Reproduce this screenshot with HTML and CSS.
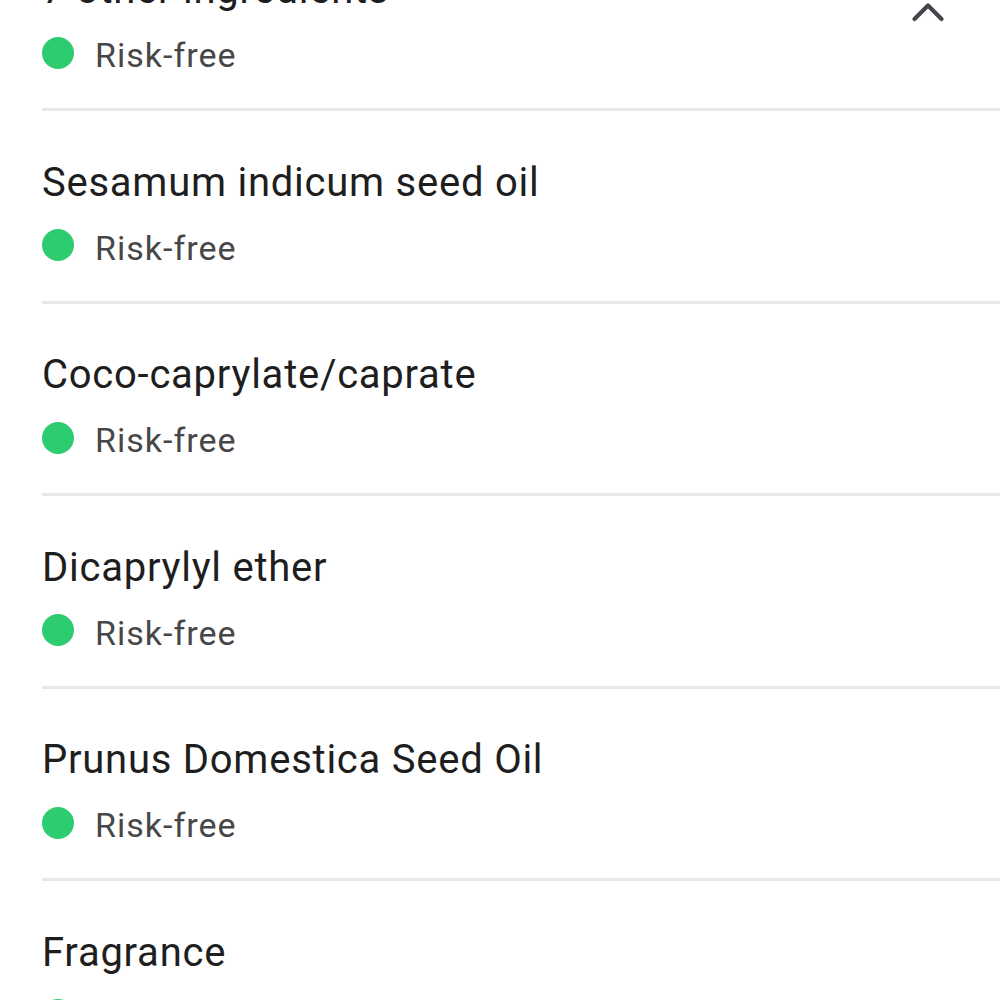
FILE: index.html
```html
<!DOCTYPE html>
<html>
<head>
<meta charset="utf-8">
<link rel="stylesheet" href="styles.css">
</head>
<body>
<ul class="list">
  <li class="item item-head">
    <div class="item-body">
      <div class="name">7 other ingredients</div>
      <div class="status"><span class="dot"></span><span class="label">Risk-free</span></div>
    </div>
    <svg class="chevron" width="34" height="22" viewBox="0 0 34 22"><polyline points="3.5,19 17,5.5 30.5,19" fill="none" stroke="#45454d" stroke-width="4.2" stroke-linecap="round" stroke-linejoin="round"/></svg>
  </li>
  <li class="item">
    <div class="item-body">
      <div class="name">Sesamum indicum seed oil</div>
      <div class="status"><span class="dot"></span><span class="label">Risk-free</span></div>
    </div>
  </li>
  <li class="item">
    <div class="item-body">
      <div class="name">Coco-caprylate/caprate</div>
      <div class="status"><span class="dot"></span><span class="label">Risk-free</span></div>
    </div>
  </li>
  <li class="item">
    <div class="item-body">
      <div class="name">Dicaprylyl ether</div>
      <div class="status"><span class="dot"></span><span class="label">Risk-free</span></div>
    </div>
  </li>
  <li class="item">
    <div class="item-body">
      <div class="name">Prunus Domestica Seed Oil</div>
      <div class="status"><span class="dot"></span><span class="label">Risk-free</span></div>
    </div>
  </li>
  <li class="item">
    <div class="item-body">
      <div class="name">Fragrance</div>
      <div class="status"><span class="dot"></span><span class="label">Risk-free</span></div>
    </div>
  </li>
</ul>
</body>
</html>
```

FILE: styles.css
```css
html, body {
  margin: 0;
  padding: 0;
  background: #ffffff;
}
body {
  font-family: Roboto, "Noto Sans", Arial, sans-serif;
  overflow: hidden;
  height: 1000px;
}
.list {
  list-style: none;
  margin: -81.5px 0 0 42px;
  padding: 0;
}
.item {
  display: flex;
  align-items: center;
  justify-content: space-between;
  padding: 48.5px 0 33px 0;
  border-bottom: 3px solid #e8e8e8;
}
.item-body {
  display: flex;
  flex-direction: column;
  gap: 22px;
}
.name {
  font-size: 40px;
  line-height: 46px;
  letter-spacing: 0.75px;
  color: #1e1e1e;
}
.status {
  display: flex;
  align-items: center;
  height: 40px;
}
.dot {
  width: 32px;
  height: 32px;
  border-radius: 50%;
  background: #2ecc71;
  margin-bottom: 5px;
  flex: none;
}
.label {
  margin-left: 21px;
  font-size: 34px;
  line-height: 40px;
  letter-spacing: 1px;
  color: #474747;
}
.chevron {
  margin-right: 55px;
  margin-top: -21px;
}
```
